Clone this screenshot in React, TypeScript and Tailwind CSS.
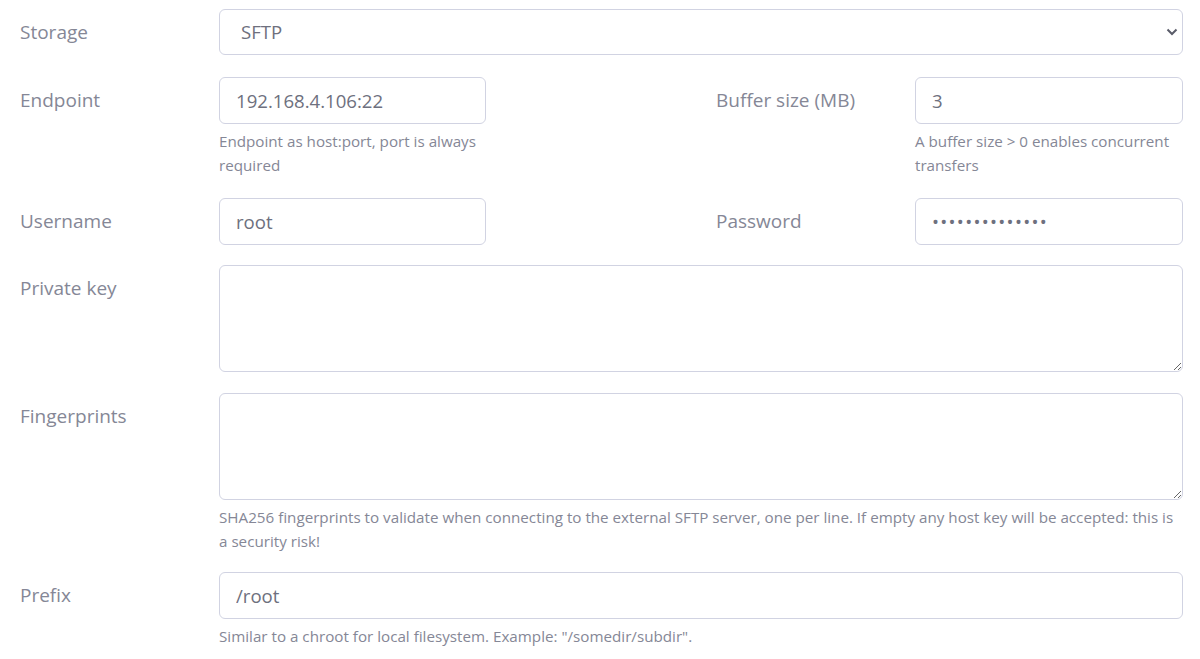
import React from "react"

const labelCls =
	"w-[199px] shrink-0 h-[47px] flex items-center text-[19px] text-[#858796]"
const inputCls =
	"w-full h-[47px] rounded-[6px] border border-[#d1d3e2] bg-white px-4 text-[18.6px] text-[#6e707e] outline-none"
const areaCls =
	"block w-full h-[107px] rounded-[6px] border border-[#d1d3e2] bg-white px-4 py-2 text-[18.6px] text-[#6e707e] outline-none"
const helpCls = "mt-[5px] text-[15.2px] leading-[24px] text-[#858796]"

function Field({
	label,
	children,
	help,
	className = "",
}: {
	label: string
	children: React.ReactNode
	help?: string
	className?: string
}) {
	return (
		<div className={`flex items-start ${className}`}>
			<div className={labelCls}>{label}</div>
			<div className="flex-1 min-w-0">
				{children}
				{help && <p className={helpCls}>{help}</p>}
			</div>
		</div>
	)
}

export default function App() {
	return (
		<div
			className="bg-white min-h-screen pl-5 pr-[17px] pt-[9px]"
			style={{ fontFamily: "'Open Sans', 'Liberation Sans', sans-serif" }}
		>
			{/* Storage */}
			<Field label="Storage" className="mb-[21px]">
				<div className="relative h-[46px]">
					<select
						defaultValue="sftp"
						className="block w-full h-[46px] appearance-none rounded-[6px] border border-[#d1d3e2] bg-white pl-[21px] text-[18.6px] text-[#6e707e] outline-none"
					>
						<option value="sftp">SFTP</option>
					</select>
					<svg
						className="absolute right-[5px] top-1/2 -translate-y-1/2 pointer-events-none"
						width="12"
						height="8"
						viewBox="0 0 12 8"
					>
						<path
							d="M1.5 1.5 L6 6 L10.5 1.5"
							fill="none"
							stroke="#5a5c69"
							strokeWidth="2"
						/>
					</svg>
				</div>
			</Field>

			{/* Endpoint / Buffer */}
			<div className="flex mb-[21px]">
				<Field
					label="Endpoint"
					help="Endpoint as host:port, port is always required"
					className="w-[466px] flex-none"
				>
					<input className={inputCls} defaultValue="192.168.4.106:22" />
				</Field>
				<div className="w-[230px] shrink-0" />
				<Field
					label="Buffer size (MB)"
					help="A buffer size > 0 enables concurrent transfers"
					className="flex-1"
				>
					<input className={inputCls} defaultValue="3" />
				</Field>
			</div>

			{/* Username / Password */}
			<div className="flex mb-[20px]">
				<Field label="Username" className="w-[466px] flex-none">
					<input className={inputCls} defaultValue="root" />
				</Field>
				<div className="w-[230px] shrink-0" />
				<Field label="Password" className="flex-1">
					<input
						type="password"
						className={`${inputCls} tracking-[1.3px]`}
						defaultValue="supersecret123"
					/>
				</Field>
			</div>

			{/* Private key */}
			<Field label="Private key" className="mb-[21px]">
				<textarea className={areaCls} />
			</Field>

			{/* Fingerprints */}
			<Field
				label="Fingerprints"
				help="SHA256 fingerprints to validate when connecting to the external SFTP server, one per line. If empty any host key will be accepted: this is a security risk!"
				className="mb-[19px]"
			>
				<textarea className={areaCls} />
			</Field>

			{/* Prefix */}
			<Field
				label="Prefix"
				help={'Similar to a chroot for local filesystem. Example: "/somedir/subdir".'}
			>
				<input className={inputCls} defaultValue="/root" />
			</Field>
		</div>
	)
}
